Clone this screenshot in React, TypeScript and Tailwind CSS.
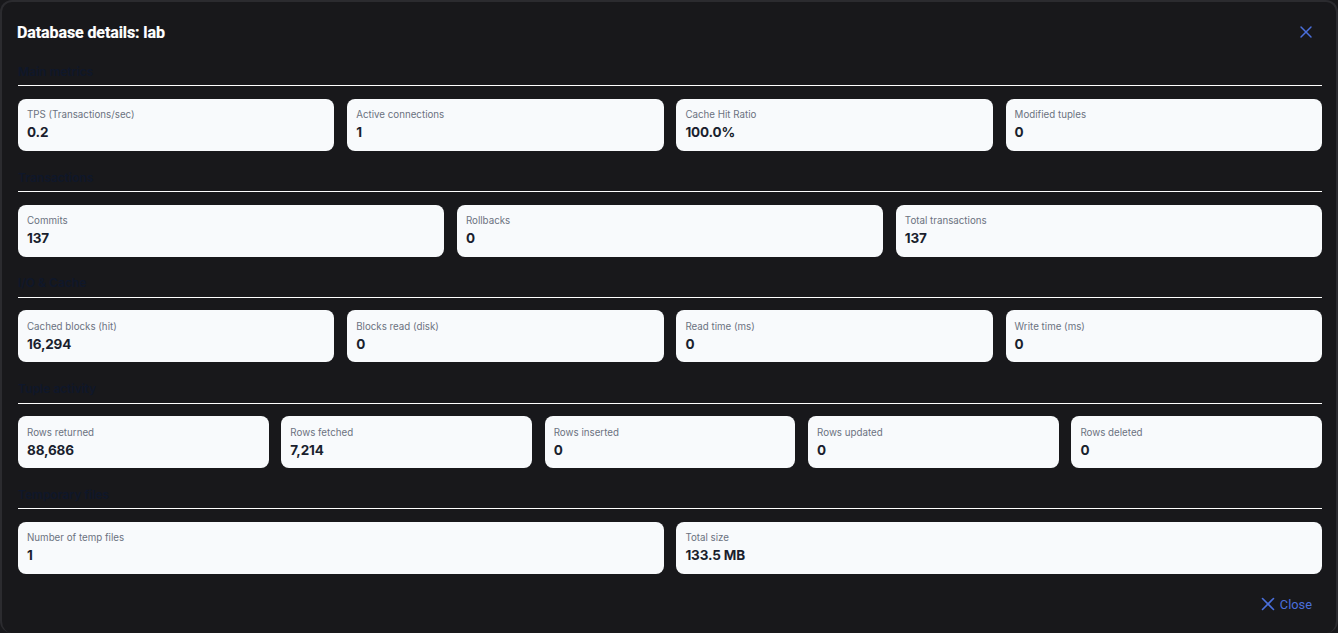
import { X } from "lucide-react";

type Metric = { label: string; value: string };
type Section = { title: string; cols: string; metrics: Metric[] };

const sections: Section[] = [
  {
    title: "Main metrics",
    cols: "grid-cols-4",
    metrics: [
      { label: "TPS (Transactions/sec)", value: "0.2" },
      { label: "Active connections", value: "1" },
      { label: "Cache Hit Ratio", value: "100.0%" },
      { label: "Modified tuples", value: "0" },
    ],
  },
  {
    title: "Transactions",
    cols: "grid-cols-3",
    metrics: [
      { label: "Commits", value: "137" },
      { label: "Rollbacks", value: "0" },
      { label: "Total transactions", value: "137" },
    ],
  },
  {
    title: "I/O & Cache",
    cols: "grid-cols-4",
    metrics: [
      { label: "Cached blocks (hit)", value: "16,294" },
      { label: "Blocks read (disk)", value: "0" },
      { label: "Read time (ms)", value: "0" },
      { label: "Write time (ms)", value: "0" },
    ],
  },
  {
    title: "Tuple activity",
    cols: "grid-cols-5",
    metrics: [
      { label: "Rows returned", value: "88,686" },
      { label: "Rows fetched", value: "7,214" },
      { label: "Rows inserted", value: "0" },
      { label: "Rows updated", value: "0" },
      { label: "Rows deleted", value: "0" },
    ],
  },
  {
    title: "Temporary files",
    cols: "grid-cols-2",
    metrics: [
      { label: "Number of temp files", value: "1" },
      { label: "Total size", value: "133.5 MB" },
    ],
  },
];

export default function App() {
  return (
    <div className="h-[633px] w-[1338px] overflow-hidden bg-[#18181b]">
      <div className="h-full rounded-[12px] border-x-2 border-t-2 border-[#2b2b2f] bg-[#18181b] pl-4 pr-[14px] font-['Inter',sans-serif]">
        <div className="flex h-[59.3px] items-center justify-between pt-[3px]">
          <h2 className="-ml-px font-['Roboto',sans-serif] text-base font-bold tracking-[-0.1px] text-white [-webkit-text-stroke:0.2px_white]">
            Database details: lab
          </h2>
          <button className="mr-[6px] -mt-[2px] text-[#4a6fdc]">
            <X size={20} strokeWidth={1.75} />
          </button>
        </div>
        {sections.map((section) => (
          <section key={section.title} className="h-[105.75px]">
            <h3 className="h-[24px] pt-[1.5px] text-xs font-semibold leading-[18px] text-[#0f172a]">
              {section.title}
            </h3>
            <div className="h-px bg-white" />
            <div className={`mt-[12.5px] grid gap-[12.8px] ${section.cols}`}>
              {section.metrics.map((m) => (
                <div key={m.label} className="h-[52px] rounded-[8px] bg-[#f8fafc] px-[9px] pt-[9.55px]">
                  <div className="text-[9.75px] leading-[14px] text-[#6b7280]">{m.label}</div>
                  <div className="text-[13.5px] font-bold leading-[20px] tracking-[-0.15px] text-[#1a1f2e]">{m.value}</div>
                </div>
              ))}
            </div>
          </section>
        ))}
        <div className="flex justify-end pr-[10px] pt-[5px]">
          <button className="flex items-center gap-[0.5px] font-['Roboto',sans-serif] text-[12.8px] text-[#4a6fdc]">
            <X size={22} strokeWidth={1.75} className="-my-1 -mt-[6px]" />
            Close
          </button>
        </div>
      </div>
    </div>
  );
}
